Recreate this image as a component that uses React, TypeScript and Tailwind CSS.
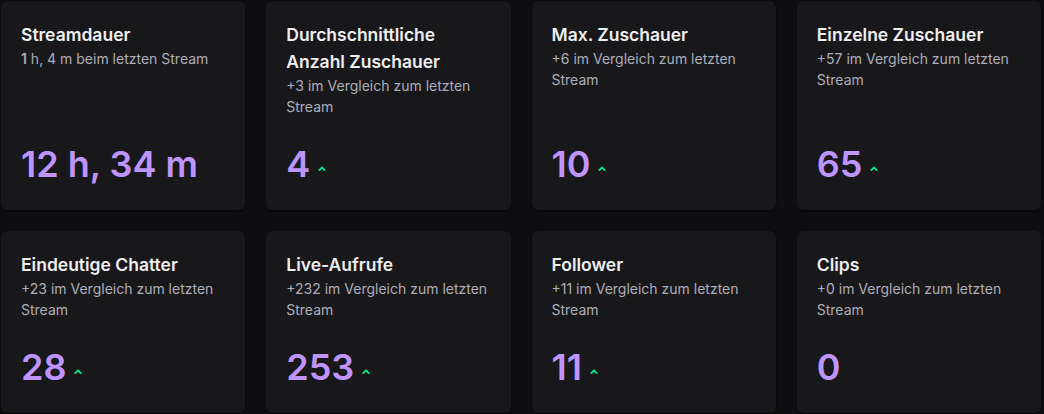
import React from "react";

type Stat = {
  title: string;
  delta: React.ReactNode;
  value: string;
  up?: boolean;
};

const stats: Stat[] = [
  {
    title: "Streamdauer",
    delta: (
      <>
        <span className="font-semibold">1</span> h, 4 m beim letzten Stream
      </>
    ),
    value: "12 h, 34 m",
  },
  { title: "Durchschnittliche Anzahl Zuschauer", delta: "+3 im Vergleich zum letzten Stream", value: "4", up: true },
  { title: "Max. Zuschauer", delta: "+6 im Vergleich zum letzten Stream", value: "10", up: true },
  { title: "Einzelne Zuschauer", delta: "+57 im Vergleich zum letzten Stream", value: "65", up: true },
  { title: "Eindeutige Chatter", delta: "+23 im Vergleich zum letzten Stream", value: "28", up: true },
  { title: "Live-Aufrufe", delta: "+232 im Vergleich zum letzten Stream", value: "253", up: true },
  { title: "Follower", delta: "+11 im Vergleich zum letzten Stream", value: "11", up: true },
  { title: "Clips", delta: "+0 im Vergleich zum letzten Stream", value: "0" },
];

function UpArrow() {
  return (
    <svg width="8" height="5" viewBox="0 0 8 5" className="shrink-0">
      <path d="M0.8 4.6 L4 1.4 L7.2 4.6" fill="none" stroke="#00f593" strokeWidth="1.8" />
    </svg>
  );
}

function StatCard({ stat }: { stat: Stat }) {
  return (
    <div className="flex flex-col rounded-md bg-[#18181b] p-5 shadow-[0_1px_2px_rgba(0,0,0,0.6)]">
      <p className="text-[17.5px] font-semibold leading-[27px] text-[#efeff1]">{stat.title}</p>
      <p className="text-[14px] leading-[21px] text-[#adadb8]">{stat.delta}</p>
      <div className="mt-auto flex items-end pt-[21px]">
        <span className="text-[36px] font-semibold leading-[52px] text-[#bf94ff]">{stat.value}</span>
        {stat.up && (
          <span className="flex h-[52px] items-end pb-[19px] pl-[8px]">
            <UpArrow />
          </span>
        )}
      </div>
    </div>
  );
}

export default function App() {
  return (
    <div
      className="h-[414px] w-[1044px] overflow-hidden bg-[#0e0e10] pl-[1px] pt-[1px]"
      style={{ fontFamily: "Inter, 'Noto Sans', sans-serif" }}
    >
      <div className="grid w-[1040px] grid-cols-4 gap-[21px]">
        {stats.map((s) => (
          <StatCard key={s.title} stat={s} />
        ))}
      </div>
    </div>
  );
}
